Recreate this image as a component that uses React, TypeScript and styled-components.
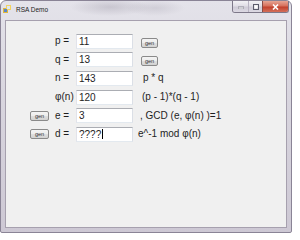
import React from 'react';
import styled, { createGlobalStyle } from 'styled-components';

const GlobalStyle = createGlobalStyle`
  body {
    margin: 0;
    background: #ffffff;
    font-family: "Liberation Sans", Arial, sans-serif;
  }
`;

const Window = styled.div`
  box-sizing: border-box;
  width: 292px;
  height: 233px;
  display: flex;
  flex-direction: column;
  padding: 0 4px 4px 4px;
  border: 1px solid #8a8496;
  border-radius: 6px 6px 2px 2px;
  background: linear-gradient(180deg, #e4e3ea 0%, #d9d6df 40%, #cdc8d4 100%);
`;

const TitleBar = styled.div`
  height: 19px;
  display: flex;
  align-items: flex-start;
  background:
    radial-gradient(ellipse 40px 9px at 105px 6px, rgba(150, 145, 160, 0.35), transparent),
    radial-gradient(ellipse 30px 8px at 150px 7px, rgba(150, 145, 160, 0.25), transparent);
`;

const AppIcon = styled.svg`
  margin: 4px 0 0 -2px;
  flex: none;
`;

const Title = styled.span`
  margin: 5px 0 0 4px;
  font-size: 6.5px;
  line-height: 7px;
  color: #1c1c1c;
`;

const CaptionGroup = styled.div`
  margin-left: auto;
  margin-right: -2px;
  display: flex;
  border: 1px solid #7d7889;
  border-top: none;
  border-radius: 0 0 3px 3px;
  overflow: hidden;
`;

const CaptionButton = styled.div<{ $w: number; $close?: boolean }>`
  width: ${p => p.$w}px;
  height: 11px;
  display: flex;
  align-items: center;
  justify-content: center;
  box-sizing: border-box;
  border-left: ${p => (p.$close ? '1px solid #8a4a44' : '1px solid #b8b3c2')};
  background: ${p =>
    p.$close
      ? 'linear-gradient(180deg, #e7a594 0%, #d6705c 45%, #c2412d 55%, #d4705a 100%)'
      : 'linear-gradient(180deg, #f2f1f5 0%, #e0dee6 45%, #cfcbd7 55%, #dcd9e3 100%)'};
  &:first-child {
    border-left: none;
  }
`;

const Client = styled.div`
  flex: 1;
  background: #f0f0f0;
  border: 1px solid #a6a0ae;
  display: grid;
  grid-template-columns: 19px 27px 57px 1fr;
  grid-auto-rows: 15px;
  row-gap: 3.7px;
  align-content: start;
  padding: 12.5px 0 0 24px;
`;

const Label = styled.span`
  padding-left: 6px;
  align-self: center;
  font-size: 10px;
  line-height: 12px;
  color: #1e1e1e;
  white-space: nowrap;
`;

const TextBox = styled.div`
  box-sizing: border-box;
  height: 15px;
  padding-left: 2px;
  background: #ffffff;
  border: 1px solid;
  border-color: #abadb3 #dbdfe6 #e3e9ef #e2e3ea;
  font-size: 10px;
  line-height: 13px;
  color: #1e1e1e;
  display: flex;
  align-items: center;
`;

const Caret = styled.span`
  display: inline-block;
  width: 1px;
  height: 10px;
  margin-left: 1px;
  background: #000;
`;

const Note = styled.span<{ $indent: number }>`
  grid-column: 4;
  margin-left: ${p => p.$indent}px;
  align-self: center;
  font-size: 10px;
  line-height: 12px;
  color: #1e1e1e;
  white-space: nowrap;
`;

const GenButton = styled.div<{ $side?: boolean }>`
  box-sizing: border-box;
  width: ${p => (p.$side ? 17 : 19)}px;
  height: 10px;
  margin: ${p => (p.$side ? '3px 0 0 8px' : '0')};
  align-self: center;
  justify-self: start;
  grid-column: ${p => (p.$side ? 4 : 1)};
  display: flex;
  align-items: center;
  justify-content: center;
  border: 1px solid #8a8a8a;
  border-radius: 2px;
  background: linear-gradient(180deg, #f4f4f4 0%, #ececec 48%, #dedede 52%, #d2d2d2 100%);
  font-size: 5.5px;
  line-height: 6px;
  color: #333;
`;

const Spacer = styled.span``;

const Row: React.FC<{ gen?: boolean; label: string; value: React.ReactNode; extra?: React.ReactNode }> = ({
  gen,
  label,
  value,
  extra,
}) => (
  <>
    {gen ? <GenButton>gen</GenButton> : <Spacer />}
    <Label>{label}</Label>
    <TextBox>{value}</TextBox>
    {extra}
  </>
);

export default function App() {
  return (
    <>
      <GlobalStyle />
      <Window>
        <TitleBar>
          <AppIcon width="9" height="9" viewBox="0 0 9 9">
            <rect x="0" y="3" width="5" height="5" fill="#e0b83a" />
            <rect x="3" y="0" width="5" height="5" fill="#f4d35e" />
            <rect x="1" y="4" width="3" height="3" fill="#5a86c8" />
            <rect x="4" y="1" width="3" height="3" fill="#d9e6f5" />
          </AppIcon>
          <Title>RSA Demo</Title>
          <CaptionGroup>
            <CaptionButton $w={15}>
              <svg width="6" height="4" viewBox="0 0 6 4">
                <rect x="0" y="2" width="6" height="2" fill="#ffffff" stroke="#5b5b6b" strokeWidth="0.6" />
              </svg>
            </CaptionButton>
            <CaptionButton $w={14}>
              <svg width="6" height="6" viewBox="0 0 6 6">
                <rect x="0.5" y="0.5" width="5" height="5" fill="none" stroke="#5b5b6b" strokeWidth="1" />
                <rect x="1.5" y="1.5" width="3" height="3" fill="#ffffff" />
              </svg>
            </CaptionButton>
            <CaptionButton $w={26} $close>
              <svg width="7" height="6" viewBox="0 0 7 6">
                <path d="M1 0.5 L6 5.5 M6 0.5 L1 5.5" stroke="#ffffff" strokeWidth="1.6" />
              </svg>
            </CaptionButton>
          </CaptionGroup>
        </TitleBar>
        <Client>
          <Row label="p =" value="11" extra={<GenButton $side>gen</GenButton>} />
          <Row label="q =" value="13" extra={<GenButton $side>gen</GenButton>} />
          <Row label="n =" value="143" extra={<Note $indent={10}>p * q</Note>} />
          <Row label="φ(n)" value="120" extra={<Note $indent={9}>(p - 1)*(q - 1)</Note>} />
          <Row gen label="e =" value="3" extra={<Note $indent={7}>, GCD (e, φ(n) )=1</Note>} />
          <Row
            gen
            label="d ="
            value={
              <>
                ????
                <Caret />
              </>
            }
            extra={<Note $indent={5}>e^-1 mod φ(n)</Note>}
          />
        </Client>
      </Window>
    </>
  );
}
